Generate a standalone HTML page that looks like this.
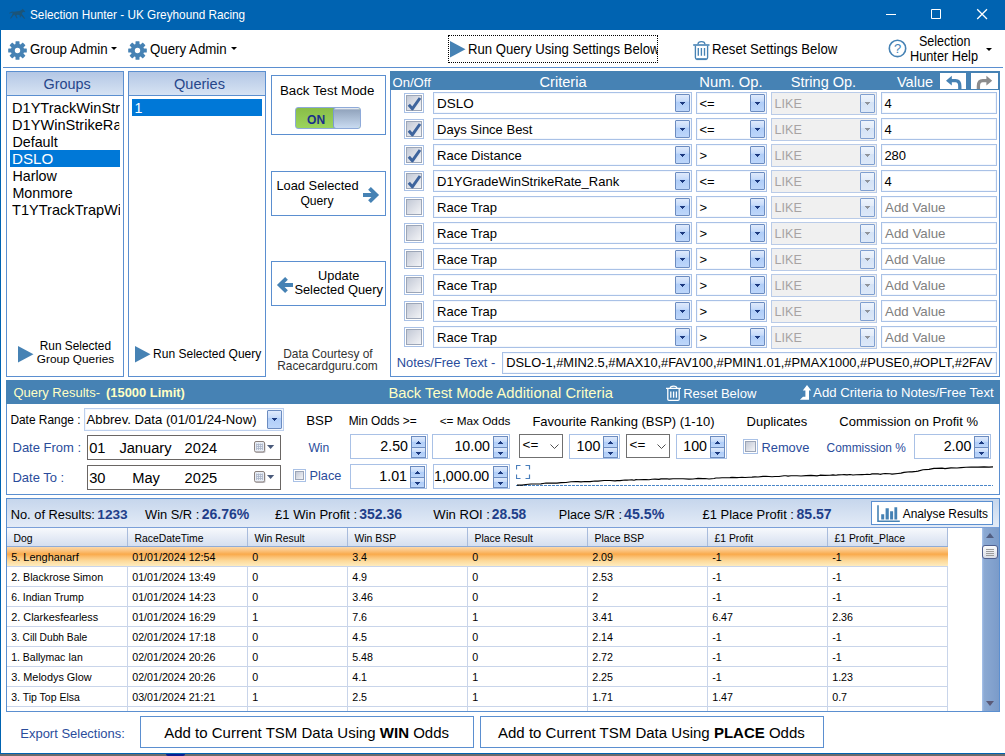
<!DOCTYPE html><html><head><meta charset="utf-8"><title>Selection Hunter - UK Greyhound Racing</title><style>
*{box-sizing:border-box;margin:0;padding:0}
html,body{width:1005px;height:756px;overflow:hidden;background:#fff}
body{font-family:"Liberation Sans",sans-serif;font-size:12px;color:#000;position:relative}
.a{position:absolute;white-space:nowrap}
.pn{position:absolute;border:1px solid #5b8fd0;background:#fff}
.hd{position:absolute;left:0;right:0;top:0;background:linear-gradient(#b4c7e5,#d6e3f3);border-bottom:1px solid #5b8fd0}
.bt{position:absolute;border:1px solid #5b8fd0;background:#fff}
.cb{position:absolute;border:1px solid #a9c1e6;background:#fff;box-shadow:inset 0 0 0 1px #f3f7fd}
.cb.dis{background:#f0f0f0;border-color:#b9cbe8;box-shadow:none}
.ar{position:absolute;width:15px;height:18px;border:1px solid #6c8cc0;border-radius:1px;background:linear-gradient(#dfeafc 0%,#c6dbfa 40%,#afcdf8 42%,#bdd6fa 100%)}
.ar:after{content:"";position:absolute;left:4px;top:7px;width:5px;height:3px;background:linear-gradient(#1c3a80,#1c3a80) 0 0/5px 1px no-repeat,linear-gradient(#1c3a80,#1c3a80) 1px 1px/3px 1px no-repeat,linear-gradient(#1c3a80,#1c3a80) 2px 2px/1px 1px no-repeat}
.ar.d{background:linear-gradient(#eef4fc 0%,#e3ecf9 42%,#d5e3f6 44%,#dde8f8 100%);border-color:#7f9fd0}
.ar.d:after{background:linear-gradient(#8f949c,#8f949c) 0 0/5px 1px no-repeat,linear-gradient(#8f949c,#8f949c) 1px 1px/3px 1px no-repeat,linear-gradient(#8f949c,#8f949c) 2px 2px/1px 1px no-repeat}
.ck{position:absolute;width:20px;height:20px;border:1px solid #a9c1e6;background:#fff}
.ck i{position:absolute;left:1px;top:1px;right:1px;bottom:1px;border:1px solid #9ca6b8;background:linear-gradient(135deg,#c3c9d6,#f3f4f7)}
.sp{position:absolute;border:1px solid #a9c1e6;background:#fff}
.sb{position:absolute;width:15px;height:22px}
.sb b{position:absolute;left:0;right:0;height:12px;border:1px solid #6c8cc0;background:linear-gradient(#dfeafc 0%,#c6dbfa 45%,#afcdf8 50%,#bdd6fa 100%)}
.sb b:first-child{top:0}.sb b:last-child{top:11px;height:11px}
.sb b:after{content:"";position:absolute;left:4px;top:4px;width:5px;height:3px}
.sb b:first-child:after{background:linear-gradient(#1c3a80,#1c3a80) 2px 0/1px 1px no-repeat,linear-gradient(#1c3a80,#1c3a80) 1px 1px/3px 1px no-repeat,linear-gradient(#1c3a80,#1c3a80) 0 2px/5px 1px no-repeat}
.sb b:last-child:after{top:4px;background:linear-gradient(#1c3a80,#1c3a80) 0 0/5px 1px no-repeat,linear-gradient(#1c3a80,#1c3a80) 1px 1px/3px 1px no-repeat,linear-gradient(#1c3a80,#1c3a80) 2px 2px/1px 1px no-repeat}
.sel{position:absolute;border:1px solid #707070;background:#fff}
</style></head><body>
<div class="a" style="left:0;top:0;width:1005px;height:30px;background:#0063b1"></div>
<div class="a" style="left:0;top:30px;width:1px;height:724px;background:#0063b1"></div>
<div class="a" style="left:0;top:753px;width:1005px;height:1px;background:#0063b1"></div>
<div class="a" style="left:0;top:754px;width:1005px;height:2px;background:#6b6b6b"></div>
<div class="a" style="left:166px;top:754px;width:19px;height:2px;background:#0d1f8f;border-radius:0 0 8px 8px"></div>
<div class="a" style="left:29.8px;top:7px;font-size:13px;line-height:16px;color:#fff;transform:scaleX(0.905);transform-origin:0 0;">Selection Hunter - UK Greyhound Racing</div>
<svg class="a" style="left:870px;top:0" width="135" height="30"><path d="M16 14.500h10M61.500 9.500h9v9h-9z" stroke="#fff" stroke-width="1" fill="none"/><path d="M107.200 9.200l9.800 9.800M117 9.200l-9.800 9.800" stroke="#fff" stroke-width="1.300" fill="none"/></svg>
<svg class="a" style="left:8px;top:8px" width="19" height="12" viewBox="0 0 19 12"><path d="M1.0 5.0L4.0 3.4L6.0 3.8L11.5 3.0L13.5 2.0L14.8 0.8L15.6 1.8L17.2 3.4L16.4 4.2L15.0 3.8L13.8 5.8L15.5 8.0L17.2 10.4L16.2 10.8L13.0 7.6L12.6 9.4L11.8 9.2L11.6 7.0L9.0 6.8L8.4 7.8L9.6 10.0L8.8 10.4L7.0 7.6L6.2 6.6L3.0 10.6L2.0 10.4L4.4 6.4L4.6 4.6L1.4 5.6z" fill="#1b5478"/></svg>
<svg class="a" style="left:8.3px;top:40.9px" width="19" height="19" viewBox="-9.500 -9.500 19 19"><g fill="#4682b4"><rect x="-2" y="-9.300" width="4" height="5" rx=".5" transform="rotate(0)"/><rect x="-2" y="-9.300" width="4" height="5" rx=".5" transform="rotate(45)"/><rect x="-2" y="-9.300" width="4" height="5" rx=".5" transform="rotate(90)"/><rect x="-2" y="-9.300" width="4" height="5" rx=".5" transform="rotate(135)"/><rect x="-2" y="-9.300" width="4" height="5" rx=".5" transform="rotate(180)"/><rect x="-2" y="-9.300" width="4" height="5" rx=".5" transform="rotate(225)"/><rect x="-2" y="-9.300" width="4" height="5" rx=".5" transform="rotate(270)"/><rect x="-2" y="-9.300" width="4" height="5" rx=".5" transform="rotate(315)"/></g><circle r="4.700" fill="none" stroke="#4682b4" stroke-width="4"/></svg>
<div class="a" style="left:29.9px;top:41px;font-size:14px;line-height:17px;transform:scaleX(0.950);transform-origin:0 0;">Group Admin</div>
<div class="a" style="left:110.5px;top:47px;border:3px solid transparent;border-top:3px solid #000;border-bottom:0"></div>
<svg class="a" style="left:128.1px;top:40.9px" width="19" height="19" viewBox="-9.500 -9.500 19 19"><g fill="#4682b4"><rect x="-2" y="-9.300" width="4" height="5" rx=".5" transform="rotate(0)"/><rect x="-2" y="-9.300" width="4" height="5" rx=".5" transform="rotate(45)"/><rect x="-2" y="-9.300" width="4" height="5" rx=".5" transform="rotate(90)"/><rect x="-2" y="-9.300" width="4" height="5" rx=".5" transform="rotate(135)"/><rect x="-2" y="-9.300" width="4" height="5" rx=".5" transform="rotate(180)"/><rect x="-2" y="-9.300" width="4" height="5" rx=".5" transform="rotate(225)"/><rect x="-2" y="-9.300" width="4" height="5" rx=".5" transform="rotate(270)"/><rect x="-2" y="-9.300" width="4" height="5" rx=".5" transform="rotate(315)"/></g><circle r="4.700" fill="none" stroke="#4682b4" stroke-width="4"/></svg>
<div class="a" style="left:149.8px;top:41px;font-size:14px;line-height:17px;transform:scaleX(0.947);transform-origin:0 0;">Query Admin</div>
<div class="a" style="left:230.5px;top:47px;border:3px solid transparent;border-top:3px solid #000;border-bottom:0"></div>
<div class="a" style="left:448px;top:35px;width:210px;height:28px;border:1px dotted #000"></div>
<svg class="a" style="left:450px;top:41px" width="16" height="17"><path d="M0 0l15.500 8.300L0 16.600z" fill="#4682b4"/></svg>
<div class="a" style="left:467.8px;top:41px;font-size:14px;line-height:17px;transform:scaleX(0.939);transform-origin:0 0;width:202.2px;overflow:hidden;">Run Query Using Settings Below</div>
<svg class="a" style="left:693px;top:40px" width="17" height="21" viewBox="0 0 17 21"><path d="M.2 5H16.500" stroke="#4682b4" stroke-width="1.600" fill="none"/><path d="M5 4.300Q5 1.600 8.400 1.600 11.900 1.600 11.900 4.300M2.400 5.800V17.600Q2.400 19.200 4 19.200H13Q14.600 19.200 14.600 17.600V5.800M5.300 8.100V15.700M8.400 8.100V15.700M11.500 8.100V15.700" stroke="#4682b4" stroke-width="1.350" fill="none"/><path d="M3.500 19.200H13.500" stroke="#4682b4" stroke-width="1.800" fill="none"/></svg>
<div class="a" style="left:712.4px;top:41px;font-size:14px;line-height:17px;transform:scaleX(0.941);transform-origin:0 0;">Reset Settings Below</div>
<svg class="a" style="left:887.500px;top:39px" width="19" height="19" viewBox="0 0 19 19"><circle cx="9.500" cy="9.400" r="8.200" fill="none" stroke="#4682b4" stroke-width="1.600"/><text x="9.500" y="14" font-size="13" text-anchor="middle" fill="#4682b4" font-family="Liberation Sans,sans-serif">?</text></svg>
<div class="a" style="left:918.8px;top:33px;font-size:14px;line-height:17px;transform:scaleX(0.894);transform-origin:0 0;">Selection</div>
<div class="a" style="left:910.4px;top:48px;font-size:14px;line-height:17px;transform:scaleX(0.910);transform-origin:0 0;">Hunter Help</div>
<div class="a" style="left:985.5px;top:48px;border:3px solid transparent;border-top:3px solid #000;border-bottom:0"></div>
<div class="a" style="left:3px;top:67px;width:1000px;height:1px;background:#5b8fd0"></div>
<div class="pn" style="left:6px;top:71px;width:118px;height:306px"><div class="hd" style="height:24px"></div></div>
<div class="a" style="left:43.5px;top:76px;font-size:14.42px;line-height:17px;color:#26468a;">Groups</div>
<div class="a" style="left:12.4px;top:100px;font-size:14.3px;line-height:17px;transform:scaleX(1.020);transform-origin:0 0;width:105.5px;overflow:hidden;">D1YTrackWinStr</div>
<div class="a" style="left:12.4px;top:117px;font-size:14.3px;line-height:17px;transform:scaleX(1.021);transform-origin:0 0;width:105.4px;overflow:hidden;">D1YWinStrikeRa</div>
<div class="a" style="left:12.4px;top:134px;font-size:14.3px;line-height:17px;transform:scaleX(1.000);transform-origin:0 0;width:107.6px;overflow:hidden;">Default</div>
<div class="a" style="left:10px;top:150px;width:110px;height:17px;background:#0078d7"></div>
<div class="a" style="left:12.4px;top:151px;font-size:14.3px;line-height:17px;color:#fff;transform:scaleX(1.060);transform-origin:0 0;width:101.5px;overflow:hidden;">DSLO</div>
<div class="a" style="left:12.4px;top:168px;font-size:14.3px;line-height:17px;transform:scaleX(1.000);transform-origin:0 0;width:107.6px;overflow:hidden;">Harlow</div>
<div class="a" style="left:12.4px;top:185px;font-size:14.3px;line-height:17px;transform:scaleX(1.000);transform-origin:0 0;width:107.6px;overflow:hidden;">Monmore</div>
<div class="a" style="left:12.4px;top:202px;font-size:14.3px;line-height:17px;transform:scaleX(1.020);transform-origin:0 0;width:105.5px;overflow:hidden;">T1YTrackTrapWi</div>
<svg class="a" style="left:18px;top:346px" width="16" height="17"><path d="M0 0l15.500 8.300L0 16.600z" fill="#4682b4"/></svg>
<div class="a" style="left:39.8px;top:339px;font-size:11.86px;line-height:14px;">Run Selected</div>
<div class="a" style="left:36.8px;top:352px;font-size:11.8px;line-height:14px;">Group Queries</div>
<div class="pn" style="left:128px;top:71px;width:138px;height:306px"><div class="hd" style="height:24px"></div></div>
<div class="a" style="left:174px;top:76px;font-size:14.56px;line-height:17px;color:#26468a;">Queries</div>
<div class="a" style="left:132px;top:99px;width:130px;height:17px;background:#0078d7"></div>
<div class="a" style="left:134.5px;top:100px;font-size:14.3px;line-height:17px;color:#fff;">1</div>
<svg class="a" style="left:135px;top:346px" width="16" height="17"><path d="M0 0l15.500 8.300L0 16.600z" fill="#4682b4"/></svg>
<div class="a" style="left:153.1px;top:347px;font-size:12.03px;line-height:14px;">Run Selected Query</div>
<div class="bt" style="left:271px;top:75px;width:115px;height:60px"></div>
<div class="a" style="left:279.9px;top:83px;font-size:13.32px;line-height:16px;">Back Test Mode</div>
<div class="a" style="left:295px;top:107px;width:66px;height:22px;border:1px solid #8eaad9;border-radius:3px;background:linear-gradient(#89bd48,#9bd45c);overflow:hidden"><div class="a" style="left:37px;top:-1px;width:29px;height:22px;border:1px solid #7b9bd3;border-radius:3px;background:linear-gradient(#fff 0,#93a5be 2px,#c9dbf1 100%)"></div></div>
<div class="a" style="left:306.5px;top:112px;font-size:13.3px;line-height:16px;color:#1b2f8a;font-weight:bold;transform:scaleX(0.907);transform-origin:0 0;">ON</div>
<div class="bt" style="left:271px;top:171px;width:115px;height:45px"></div>
<div class="a" style="left:276.4px;top:178px;font-size:12.86px;line-height:15px;">Load Selected</div>
<div class="a" style="left:300.4px;top:194px;font-size:12.15px;line-height:15px;">Query</div>
<svg class="a" style="left:362px;top:186px" width="18" height="18" viewBox="0 0 18 18"><path d="M1 9h14M7.500 2.300l6.800 6.700-6.800 6.700" stroke="#4682b4" stroke-width="3.900" fill="none"/></svg>
<div class="bt" style="left:271px;top:261px;width:115px;height:45px"></div>
<div class="a" style="left:318.1px;top:268px;font-size:12.81px;line-height:15px;">Update</div>
<div class="a" style="left:294.4px;top:282px;font-size:12.85px;line-height:15px;">Selected Query</div>
<svg class="a" style="left:276px;top:276px" width="18" height="18" viewBox="0 0 18 18"><path d="M17 9H3M10.500 2.300L3.700 9l6.800 6.700" stroke="#4682b4" stroke-width="3.900" fill="none"/></svg>
<div class="a" style="left:283.2px;top:347px;font-size:11.93px;line-height:14px;color:#333;">Data Courtesy of</div>
<div class="a" style="left:277.2px;top:359px;font-size:11.91px;line-height:14px;color:#333;">Racecardguru.com</div>
<div class="pn" style="left:390px;top:71px;width:610px;height:306px"></div>
<div class="a" style="left:390px;top:71px;width:610px;height:19px;background:#4682b4"></div>
<div class="a" style="left:392.6px;top:75px;font-size:13.05px;line-height:16px;color:#fff;">On/Off</div>
<div class="a" style="left:539.6px;top:73px;font-size:14.58px;line-height:18px;color:#fff;">Criteria</div>
<div class="a" style="left:699.3px;top:73px;font-size:14.79px;line-height:18px;color:#fff;">Num. Op.</div>
<div class="a" style="left:790.8px;top:74px;font-size:14.53px;line-height:17px;color:#fff;">String Op.</div>
<div class="a" style="left:897px;top:74px;font-size:14.5px;line-height:17px;color:#fff;">Value</div>
<div class="a" style="left:940px;top:73px;width:26px;height:16px;background:#fff"></div>
<div class="a" style="left:971px;top:73px;width:27px;height:16px;background:#fff"></div>
<svg class="a" style="left:940px;top:73px" width="26" height="16" viewBox="0 0 26 16"><path d="M6 7.700L11.800 2.800v9.800z" fill="#4682b4"/><path d="M11 7.600h4.500q4.300 0 4.300 5.400v3" stroke="#4682b4" stroke-width="3.300" fill="none"/></svg>
<svg class="a" style="left:971px;top:73px" width="27" height="16" viewBox="0 0 27 16"><path d="M21.200 7.700L15.400 2.800v9.800z" fill="#8c8c8c"/><path d="M16.200 7.600h-4.500q-4.300 0-4.300 5.400v3" stroke="#8c8c8c" stroke-width="3.300" fill="none"/></svg>
<div class="ck" style="left:404px;top:93px"><i></i><svg class="a" style="left:-1px;top:-1px" width="20" height="20" viewBox="0 0 20 20"><path d="M4.800 11.800L8.300 15.800 16 5" stroke="#3e649d" stroke-width="3" fill="none" stroke-linejoin="round"/></svg></div>
<div class="cb" style="left:433px;top:92px;width:259px;height:22px"><span class="ar" style="right:1px;top:1px"></span></div>
<div class="a" style="left:437.1px;top:96px;font-size:13px;line-height:16px;transform:scaleX(1.034);transform-origin:0 0;">DSLO</div>
<div class="cb" style="left:696px;top:92px;width:71px;height:22px"><span class="ar" style="right:1px;top:1px"></span></div>
<div class="a" style="left:699.5px;top:96px;font-size:13px;line-height:16px;">&lt;=</div>
<div class="cb dis" style="left:771px;top:92px;width:106px;height:23px"><span class="ar d" style="right:1px;top:1px;height:19px"></span></div>
<div class="a" style="left:774.5px;top:97px;font-size:12.6px;line-height:15px;color:#a7a3a3;">LIKE</div>
<div class="cb" style="left:881px;top:92px;width:116px;height:22px"></div>
<div class="a" style="left:884.4px;top:96px;font-size:13px;line-height:16px;">4</div>
<div class="ck" style="left:404px;top:119px"><i></i><svg class="a" style="left:-1px;top:-1px" width="20" height="20" viewBox="0 0 20 20"><path d="M4.800 11.800L8.300 15.800 16 5" stroke="#3e649d" stroke-width="3" fill="none" stroke-linejoin="round"/></svg></div>
<div class="cb" style="left:433px;top:118px;width:259px;height:22px"><span class="ar" style="right:1px;top:1px"></span></div>
<div class="a" style="left:437.1px;top:122px;font-size:13px;line-height:16px;">Days Since Best</div>
<div class="cb" style="left:696px;top:118px;width:71px;height:22px"><span class="ar" style="right:1px;top:1px"></span></div>
<div class="a" style="left:699.5px;top:122px;font-size:13px;line-height:16px;">&lt;=</div>
<div class="cb dis" style="left:771px;top:118px;width:106px;height:23px"><span class="ar d" style="right:1px;top:1px;height:19px"></span></div>
<div class="a" style="left:774.5px;top:123px;font-size:12.6px;line-height:15px;color:#a7a3a3;">LIKE</div>
<div class="cb" style="left:881px;top:118px;width:116px;height:22px"></div>
<div class="a" style="left:884.4px;top:122px;font-size:13px;line-height:16px;">4</div>
<div class="ck" style="left:404px;top:145px"><i></i><svg class="a" style="left:-1px;top:-1px" width="20" height="20" viewBox="0 0 20 20"><path d="M4.800 11.800L8.300 15.800 16 5" stroke="#3e649d" stroke-width="3" fill="none" stroke-linejoin="round"/></svg></div>
<div class="cb" style="left:433px;top:144px;width:259px;height:22px"><span class="ar" style="right:1px;top:1px"></span></div>
<div class="a" style="left:437.1px;top:148px;font-size:13px;line-height:16px;">Race Distance</div>
<div class="cb" style="left:696px;top:144px;width:71px;height:22px"><span class="ar" style="right:1px;top:1px"></span></div>
<div class="a" style="left:699.5px;top:148px;font-size:13px;line-height:16px;">&gt;</div>
<div class="cb dis" style="left:771px;top:144px;width:106px;height:23px"><span class="ar d" style="right:1px;top:1px;height:19px"></span></div>
<div class="a" style="left:774.5px;top:149px;font-size:12.6px;line-height:15px;color:#a7a3a3;">LIKE</div>
<div class="cb" style="left:881px;top:144px;width:116px;height:22px"></div>
<div class="a" style="left:884.4px;top:148px;font-size:13px;line-height:16px;">280</div>
<div class="ck" style="left:404px;top:171px"><i></i><svg class="a" style="left:-1px;top:-1px" width="20" height="20" viewBox="0 0 20 20"><path d="M4.800 11.800L8.300 15.800 16 5" stroke="#3e649d" stroke-width="3" fill="none" stroke-linejoin="round"/></svg></div>
<div class="cb" style="left:433px;top:170px;width:259px;height:22px"><span class="ar" style="right:1px;top:1px"></span></div>
<div class="a" style="left:437.1px;top:174px;font-size:13px;line-height:16px;">D1YGradeWinStrikeRate_Rank</div>
<div class="cb" style="left:696px;top:170px;width:71px;height:22px"><span class="ar" style="right:1px;top:1px"></span></div>
<div class="a" style="left:699.5px;top:174px;font-size:13px;line-height:16px;">&lt;=</div>
<div class="cb dis" style="left:771px;top:170px;width:106px;height:23px"><span class="ar d" style="right:1px;top:1px;height:19px"></span></div>
<div class="a" style="left:774.5px;top:175px;font-size:12.6px;line-height:15px;color:#a7a3a3;">LIKE</div>
<div class="cb" style="left:881px;top:170px;width:116px;height:22px"></div>
<div class="a" style="left:884.4px;top:174px;font-size:13px;line-height:16px;">4</div>
<div class="ck" style="left:404px;top:197px"><i></i></div>
<div class="cb" style="left:433px;top:196px;width:259px;height:22px"><span class="ar" style="right:1px;top:1px"></span></div>
<div class="a" style="left:437.1px;top:200px;font-size:13px;line-height:16px;">Race Trap</div>
<div class="cb" style="left:696px;top:196px;width:71px;height:22px"><span class="ar" style="right:1px;top:1px"></span></div>
<div class="a" style="left:699.5px;top:200px;font-size:13px;line-height:16px;">&gt;</div>
<div class="cb dis" style="left:771px;top:196px;width:106px;height:23px"><span class="ar d" style="right:1px;top:1px;height:19px"></span></div>
<div class="a" style="left:774.5px;top:201px;font-size:12.6px;line-height:15px;color:#a7a3a3;">LIKE</div>
<div class="cb" style="left:881px;top:196px;width:116px;height:22px"></div>
<div class="a" style="left:885.1px;top:200px;font-size:13.3px;line-height:16px;color:#808080;">Add Value</div>
<div class="ck" style="left:404px;top:223px"><i></i></div>
<div class="cb" style="left:433px;top:222px;width:259px;height:22px"><span class="ar" style="right:1px;top:1px"></span></div>
<div class="a" style="left:437.1px;top:226px;font-size:13px;line-height:16px;">Race Trap</div>
<div class="cb" style="left:696px;top:222px;width:71px;height:22px"><span class="ar" style="right:1px;top:1px"></span></div>
<div class="a" style="left:699.5px;top:226px;font-size:13px;line-height:16px;">&gt;</div>
<div class="cb dis" style="left:771px;top:222px;width:106px;height:23px"><span class="ar d" style="right:1px;top:1px;height:19px"></span></div>
<div class="a" style="left:774.5px;top:227px;font-size:12.6px;line-height:15px;color:#a7a3a3;">LIKE</div>
<div class="cb" style="left:881px;top:222px;width:116px;height:22px"></div>
<div class="a" style="left:885.1px;top:226px;font-size:13.3px;line-height:16px;color:#808080;">Add Value</div>
<div class="ck" style="left:404px;top:249px"><i></i></div>
<div class="cb" style="left:433px;top:248px;width:259px;height:22px"><span class="ar" style="right:1px;top:1px"></span></div>
<div class="a" style="left:437.1px;top:252px;font-size:13px;line-height:16px;">Race Trap</div>
<div class="cb" style="left:696px;top:248px;width:71px;height:22px"><span class="ar" style="right:1px;top:1px"></span></div>
<div class="a" style="left:699.5px;top:252px;font-size:13px;line-height:16px;">&gt;</div>
<div class="cb dis" style="left:771px;top:248px;width:106px;height:23px"><span class="ar d" style="right:1px;top:1px;height:19px"></span></div>
<div class="a" style="left:774.5px;top:253px;font-size:12.6px;line-height:15px;color:#a7a3a3;">LIKE</div>
<div class="cb" style="left:881px;top:248px;width:116px;height:22px"></div>
<div class="a" style="left:885.1px;top:252px;font-size:13.3px;line-height:16px;color:#808080;">Add Value</div>
<div class="ck" style="left:404px;top:275px"><i></i></div>
<div class="cb" style="left:433px;top:274px;width:259px;height:22px"><span class="ar" style="right:1px;top:1px"></span></div>
<div class="a" style="left:437.1px;top:278px;font-size:13px;line-height:16px;">Race Trap</div>
<div class="cb" style="left:696px;top:274px;width:71px;height:22px"><span class="ar" style="right:1px;top:1px"></span></div>
<div class="a" style="left:699.5px;top:278px;font-size:13px;line-height:16px;">&gt;</div>
<div class="cb dis" style="left:771px;top:274px;width:106px;height:23px"><span class="ar d" style="right:1px;top:1px;height:19px"></span></div>
<div class="a" style="left:774.5px;top:279px;font-size:12.6px;line-height:15px;color:#a7a3a3;">LIKE</div>
<div class="cb" style="left:881px;top:274px;width:116px;height:22px"></div>
<div class="a" style="left:885.1px;top:278px;font-size:13.3px;line-height:16px;color:#808080;">Add Value</div>
<div class="ck" style="left:404px;top:301px"><i></i></div>
<div class="cb" style="left:433px;top:300px;width:259px;height:22px"><span class="ar" style="right:1px;top:1px"></span></div>
<div class="a" style="left:437.1px;top:304px;font-size:13px;line-height:16px;">Race Trap</div>
<div class="cb" style="left:696px;top:300px;width:71px;height:22px"><span class="ar" style="right:1px;top:1px"></span></div>
<div class="a" style="left:699.5px;top:304px;font-size:13px;line-height:16px;">&gt;</div>
<div class="cb dis" style="left:771px;top:300px;width:106px;height:23px"><span class="ar d" style="right:1px;top:1px;height:19px"></span></div>
<div class="a" style="left:774.5px;top:305px;font-size:12.6px;line-height:15px;color:#a7a3a3;">LIKE</div>
<div class="cb" style="left:881px;top:300px;width:116px;height:22px"></div>
<div class="a" style="left:885.1px;top:304px;font-size:13.3px;line-height:16px;color:#808080;">Add Value</div>
<div class="ck" style="left:404px;top:327px"><i></i></div>
<div class="cb" style="left:433px;top:326px;width:259px;height:22px"><span class="ar" style="right:1px;top:1px"></span></div>
<div class="a" style="left:437.1px;top:330px;font-size:13px;line-height:16px;">Race Trap</div>
<div class="cb" style="left:696px;top:326px;width:71px;height:22px"><span class="ar" style="right:1px;top:1px"></span></div>
<div class="a" style="left:699.5px;top:330px;font-size:13px;line-height:16px;">&gt;</div>
<div class="cb dis" style="left:771px;top:326px;width:106px;height:23px"><span class="ar d" style="right:1px;top:1px;height:19px"></span></div>
<div class="a" style="left:774.5px;top:331px;font-size:12.6px;line-height:15px;color:#a7a3a3;">LIKE</div>
<div class="cb" style="left:881px;top:326px;width:116px;height:22px"></div>
<div class="a" style="left:885.1px;top:330px;font-size:13.3px;line-height:16px;color:#808080;">Add Value</div>
<div class="a" style="left:396.7px;top:355px;font-size:12.9px;line-height:15px;color:#2a4c9b;">Notes/Free Text -</div>
<div class="cb" style="left:502px;top:352px;width:495px;height:22px"></div>
<div class="a" style="left:506.2px;top:355px;font-size:12.85px;line-height:15px;">DSLO-1,#MIN2.5,#MAX10,#FAV100,#PMIN1.01,#PMAX1000,#PUSE0,#OPLT,#2FAV</div>
<div class="pn" style="left:6px;top:380px;width:994px;height:115px"></div>
<div class="a" style="left:6px;top:380px;width:994px;height:24px;background:#4682b4"></div>
<div class="a" style="left:13.4px;top:385px;font-size:12.99px;line-height:16px;color:#ffffc4;">Query Results-</div>
<div class="a" style="left:106px;top:385px;font-size:12.92px;line-height:16px;color:#ffffc4;font-weight:bold;">(15000 Limit)</div>
<div class="a" style="left:388.4px;top:384px;font-size:14.77px;line-height:18px;color:#ffffc4;">Back Test Mode Additional Criteria</div>
<svg class="a" style="left:666px;top:385px" width="15" height="17" viewBox="0 0 15 17"><path d="M0 3.400H15M4.200 3Q4.200 1.100 7.500 1.100 10.800 1.100 10.800 3M1.800 4V14.300Q1.800 15.400 3 15.400H12Q13.200 15.400 13.200 14.300V4M4.800 6.400V12.700M7.600 6.400V12.700M10.400 6.400V12.700" stroke="#fff" stroke-width="1.300" fill="none"/></svg>
<div class="a" style="left:683.2px;top:386px;font-size:13.06px;line-height:16px;color:#fff;">Reset Below</div>
<svg class="a" style="left:799px;top:384px" width="13" height="17" viewBox="0 0 13 17"><path d="M8 .9L12.200 6.500H10V15.800H.9L4 12.800H6.400V6.500H3.800z" fill="#fff"/></svg>
<div class="a" style="left:813.1px;top:385px;font-size:13.18px;line-height:16px;color:#fff;">Add Criteria to Notes/Free Text</div>
<div class="a" style="left:10.4px;top:413px;font-size:11.91px;line-height:14px;">Date Range :</div>
<div class="cb" style="left:84px;top:408px;width:200px;height:23px;border-color:#bdd0ee"><span class="ar" style="right:1px;top:1px;height:19px"></span></div>
<div class="a" style="left:86.6px;top:412px;font-size:13.15px;line-height:16px;">Abbrev. Data (01/01/24-Now)</div>
<div class="a" style="left:12.5px;top:440px;font-size:13.01px;line-height:16px;color:#2a4c9b;">Date From :</div>
<div class="a" style="left:12.5px;top:470px;font-size:12.98px;line-height:16px;color:#2a4c9b;">Date To :</div>
<div class="a" style="left:87px;top:435px;width:194px;height:25px;border:1px solid #6a6664;background:#fff"></div>
<div class="a" style="left:89.2px;top:439px;font-size:14.67px;line-height:18px;">01</div>
<div class="a" style="left:119.4px;top:439px;font-size:14.67px;line-height:18px;">January</div>
<div class="a" style="left:184.6px;top:439px;font-size:14.67px;line-height:18px;">2024</div>
<svg class="a" style="left:254px;top:441px" width="21" height="13" viewBox="0 0 21 13"><rect x="1.500" y="1.500" width="10" height="10.500" rx="1.500" fill="#c9c9cf"/><rect x=".5" y=".5" width="10" height="10.500" rx="1.500" fill="#e9eef6" stroke="#8a807c"/><path d="M2.500 3.500h6M2.500 5.500h6M2.500 7.500h6M4.500 2.500v6.500M6.500 2.500v6.500M2.500 2.500v6.500M8.500 2.500v6.500" stroke="#aab4c8" stroke-width=".8"/><path d="M13 4h7.200l-3.600 4z" fill="#4a5a7a"/></svg>
<div class="a" style="left:87px;top:465px;width:194px;height:25px;border:1px solid #6a6664;background:#fff"></div>
<div class="a" style="left:89.2px;top:469px;font-size:14.67px;line-height:18px;">30</div>
<div class="a" style="left:132.2px;top:469px;font-size:14.67px;line-height:18px;">May</div>
<div class="a" style="left:184.6px;top:469px;font-size:14.67px;line-height:18px;">2025</div>
<svg class="a" style="left:254px;top:471px" width="21" height="13" viewBox="0 0 21 13"><rect x="1.500" y="1.500" width="10" height="10.500" rx="1.500" fill="#c9c9cf"/><rect x=".5" y=".5" width="10" height="10.500" rx="1.500" fill="#e9eef6" stroke="#8a807c"/><path d="M2.500 3.500h6M2.500 5.500h6M2.500 7.500h6M4.500 2.500v6.500M6.500 2.500v6.500M2.500 2.500v6.500M8.500 2.500v6.500" stroke="#aab4c8" stroke-width=".8"/><path d="M13 4h7.200l-3.600 4z" fill="#4a5a7a"/></svg>
<div class="a" style="left:306.3px;top:413px;font-size:13.24px;line-height:16px;">BSP</div>
<div class="a" style="left:348.7px;top:414px;font-size:11.88px;line-height:14px;">Min Odds &gt;=</div>
<div class="a" style="left:439.7px;top:414px;font-size:11.78px;line-height:14px;">&lt;= Max Odds</div>
<div class="a" style="left:308.4px;top:441px;font-size:12.14px;line-height:15px;color:#2a4c9b;">Win</div>
<div class="ck" style="left:293px;top:469px;width:13px;height:13px"><i></i></div>
<div class="a" style="left:309.5px;top:468px;font-size:12.75px;line-height:15px;color:#2a4c9b;">Place</div>
<div class="sp" style="left:350px;top:434px;width:78px;height:25px"><span class="sb" style="right:1px;top:1px"><b></b><b></b></span></div>
<div class="a" style="left:380.36px;top:438px;font-size:14.2px;line-height:17px;">2.50</div>
<div class="sp" style="left:432px;top:434px;width:78px;height:25px"><span class="sb" style="right:1px;top:1px"><b></b><b></b></span></div>
<div class="a" style="left:454.46px;top:438px;font-size:14.2px;line-height:17px;">10.00</div>
<div class="sp" style="left:350px;top:464px;width:77px;height:25px"><span class="sb" style="right:1px;top:1px"><b></b><b></b></span></div>
<div class="a" style="left:379.36px;top:468px;font-size:14.2px;line-height:17px;">1.01</div>
<div class="sp" style="left:433px;top:464px;width:77px;height:25px"><span class="sb" style="right:1px;top:1px"><b></b><b></b></span></div>
<div class="a" style="left:434.02px;top:468px;font-size:14.2px;line-height:17px;">1,000.00</div>
<div class="a" style="left:532.4px;top:414px;font-size:13.01px;line-height:16px;">Favourite Ranking (BSP) (1-10)</div>
<div class="sel" style="left:519px;top:434px;width:44px;height:24px"><svg class="a" style="left:30px;top:9px" width="10" height="6"><path d="M.5.500l4 4 4-4" stroke="#505050" fill="none"/></svg></div>
<div class="a" style="left:522.6px;top:437px;font-size:13.5px;line-height:16px;">&lt;=</div>
<div class="sel" style="left:626px;top:434px;width:44px;height:24px"><svg class="a" style="left:30px;top:9px" width="10" height="6"><path d="M.5.500l4 4 4-4" stroke="#505050" fill="none"/></svg></div>
<div class="a" style="left:629.6px;top:437px;font-size:13.5px;line-height:16px;">&lt;=</div>
<div class="sp" style="left:569px;top:434px;width:51px;height:25px"><span class="sb" style="right:1px;top:1px"><b></b><b></b></span></div>
<div class="a" style="left:576.61px;top:438px;font-size:14.2px;line-height:17px;">100</div>
<div class="sp" style="left:676px;top:434px;width:51px;height:25px"><span class="sb" style="right:1px;top:1px"><b></b><b></b></span></div>
<div class="a" style="left:683.31px;top:438px;font-size:14.2px;line-height:17px;">100</div>
<div class="a" style="left:746.6px;top:414px;font-size:12.98px;line-height:16px;">Duplicates</div>
<div class="ck" style="left:743px;top:439px;width:15px;height:15px"><i></i></div>
<div class="a" style="left:761.5px;top:440px;font-size:12.84px;line-height:15px;color:#2a4c9b;">Remove</div>
<div class="a" style="left:839.3px;top:414px;font-size:13.01px;line-height:16px;">Commission on Profit %</div>
<div class="a" style="left:826.6px;top:441px;font-size:11.88px;line-height:14px;color:#2a4c9b;">Commission %</div>
<div class="sp" style="left:914px;top:434px;width:77px;height:25px"><span class="sb" style="right:1px;top:1px"><b></b><b></b></span></div>
<div class="a" style="left:943.66px;top:438px;font-size:14.2px;line-height:17px;">2.00</div>
<svg class="a" style="left:516px;top:464px" width="480" height="26" viewBox="0 0 480 26"><path d="M.5 5.500v-4h4M9.500 1.500h4v4M13.500 10.500v4h-4M4.500 14.500h-4v-4" stroke="#4a7ebb" stroke-width="1.200" fill="none"/><path d="M0 21.500h477" stroke="#4a86c8" stroke-dasharray="3 1" stroke-width="1" fill="none" shape-rendering="crispEdges"/><path d="M1 21.06 L6 21.09 L10 20.53 L15 20.02 L20 19.95 L25 19.91 L27 19.51 L30 19.05 L36 19.12 L41 19.1 L45 18.65 L50 18.45 L55 17.75 L60 17.6 L62 17.62 L65 17.84 L69 17.46 L74 17.68 L79 17.01 L82 17.1 L88 16.54 L94 16.48 L99 16.9 L101 16.61 L104 16.56 L109 16.03 L111 16.19 L113 16 L116 15.9 L118 16.21 L120 15.64 L122 15.78 L128 15.54 L130 15.62 L133 15.7 L136 15.25 L139 15.16 L143 15.4 L145 14.88 L151 14.79 L153 15.06 L157 14.79 L162 14.75 L167 14.7 L173 15.1 L177 14.96 L179 14.74 L182 14.39 L187 14.58 L189 14.49 L193 15.02 L198 14.53 L200 13.97 L203 13.98 L206 13.7 L211 13.75 L214 13.67 L216 13.35 L221 13.58 L223 13.47 L226 13.37 L229 13.52 L233 13.25 L236 13.16 L239 12.84 L242 12.99 L247 12.36 L250 12.23 L256 12.73 L259 12.47 L263 12.54 L268 11.8 L270 11.78 L272 12.06 L275 11.79 L281 11.79 L285 12.05 L290 11.68 L295 11.33 L301 11.85 L304 11.19 L309 11.43 L314 11.3 L317 10.92 L320 11.28 L322 10.86 L326 10.76 L328 10.66 L331 10.89 L334 10.47 L337 11.05 L340 10.8 L346 10.56 L349 10.54 L351 10.4 L354 10.51 L356 9.92 L362 9.83 L364 10.31 L367 9.76 L369 9.67 L374 9.79 L376 10.17 L382 9.49 L385 9.16 L388 8.43 L394 7.78 L396 7.85 L400 7.41 L402 7.09 L407 5.79 L413 5.33 L418 4.41 L420 4.37 L426 4.11 L429 4.58 L435 3.86 L441 3.96 L445 3.65 L450 3.24 L455 3.07 L460 3 L462 3.06 L468 2.82 L473 3.13 L477 2.9" stroke="#000" stroke-width="1.150" fill="none" stroke-linejoin="round"/></svg>
<div class="pn" style="left:6px;top:498px;width:994px;height:214px"></div>
<div class="a" style="left:7px;top:499px;width:992px;height:29px;background:linear-gradient(#c6d6ec,#e3ebf7);border-bottom:1px solid #7a9fd8"></div>
<div class="a" style="left:10.7px;top:507px;font-size:12.85px;line-height:15px;">No. of Results:</div>
<div class="a" style="left:97.3px;top:507px;font-size:13.66px;line-height:16px;color:#1f3f8a;font-weight:bold;">1233</div>
<div class="a" style="left:145px;top:507px;font-size:12.86px;line-height:15px;">Win S/R :</div>
<div class="a" style="left:201.7px;top:506px;font-size:14.03px;line-height:17px;color:#1f3f8a;font-weight:bold;">26.76%</div>
<div class="a" style="left:275.1px;top:507px;font-size:13.07px;line-height:16px;">£1 Win Profit :</div>
<div class="a" style="left:359.2px;top:506px;font-size:13.99px;line-height:17px;color:#1f3f8a;font-weight:bold;">352.36</div>
<div class="a" style="left:433.3px;top:507px;font-size:13.08px;line-height:16px;">Win ROI :</div>
<div class="a" style="left:491.8px;top:506px;font-size:13.79px;line-height:17px;color:#1f3f8a;font-weight:bold;">28.58</div>
<div class="a" style="left:558.8px;top:508px;font-size:12.65px;line-height:15px;">Place S/R :</div>
<div class="a" style="left:624.1px;top:506px;font-size:14.18px;line-height:17px;color:#1f3f8a;font-weight:bold;">45.5%</div>
<div class="a" style="left:702.5px;top:507px;font-size:12.96px;line-height:16px;">£1 Place Profit :</div>
<div class="a" style="left:796.5px;top:506px;font-size:14.07px;line-height:17px;color:#1f3f8a;font-weight:bold;">85.57</div>
<div class="a" style="left:871px;top:501px;width:122px;height:24px;border:1px solid #5b8fd0;background:#fff"></div>
<svg class="a" style="left:876px;top:505px" width="25" height="18" viewBox="0 0 25 18"><path d="M1.200 .2h1.600v15.400h21v1.400H1.200z" fill="#4682b4"/><path d="M5.200 9.200h3v5.400h-3zM9.600 3.200h3.200v11.400H9.600zM14.100 6.200h3v8.400h-3zM18.400 2.200h2.800v12.400h-2.800z" fill="#4682b4"/></svg>
<div class="a" style="left:902.7px;top:507px;font-size:11.92px;line-height:14px;">Analyse Results</div>
<div class="a" style="left:7px;top:528px;width:941px;height:19px;background:linear-gradient(#f7f9fc,#d5dff0);border-bottom:1px solid #8fabd6"></div>
<div class="a" style="left:13.5px;top:533px;font-size:10.4px;line-height:12px;">Dog</div>
<div class="a" style="left:127px;top:528px;width:1px;height:18px;background:#a9bcdc"></div>
<div class="a" style="left:134.5px;top:533px;font-size:10.4px;line-height:12px;">RaceDateTime</div>
<div class="a" style="left:247px;top:528px;width:1px;height:18px;background:#a9bcdc"></div>
<div class="a" style="left:254.5px;top:533px;font-size:10.4px;line-height:12px;">Win Result</div>
<div class="a" style="left:347px;top:528px;width:1px;height:18px;background:#a9bcdc"></div>
<div class="a" style="left:354.5px;top:533px;font-size:10.4px;line-height:12px;">Win BSP</div>
<div class="a" style="left:467px;top:528px;width:1px;height:18px;background:#a9bcdc"></div>
<div class="a" style="left:474.5px;top:533px;font-size:10.4px;line-height:12px;">Place Result</div>
<div class="a" style="left:587px;top:528px;width:1px;height:18px;background:#a9bcdc"></div>
<div class="a" style="left:594.5px;top:533px;font-size:10.4px;line-height:12px;">Place BSP</div>
<div class="a" style="left:707px;top:528px;width:1px;height:18px;background:#a9bcdc"></div>
<div class="a" style="left:714.5px;top:533px;font-size:10.4px;line-height:12px;">£1 Profit</div>
<div class="a" style="left:827px;top:528px;width:1px;height:18px;background:#a9bcdc"></div>
<div class="a" style="left:834.5px;top:533px;font-size:10.4px;line-height:12px;">£1 Profit_Place</div>
<div class="a" style="left:947px;top:528px;width:1px;height:18px;background:#a9bcdc"></div>
<div class="a" style="left:7px;top:547px;width:941px;height:19px;background:linear-gradient(#fcd9ab 0%,#fbc27c 20%,#f9aa4c 38%,#fbbf70 52%,#fdd999 72%,#feecbf 100%)"></div>
<div class="a" style="left:7px;top:566px;width:941px;height:1px;background:#c9d5ea"></div>
<div class="a" style="left:11.2px;top:551px;font-size:10.95px;line-height:13px;">5. Lenghanarf</div>
<div class="a" style="left:132.2px;top:551px;font-size:10.7px;line-height:13px;">01/01/2024 12:54</div>
<div class="a" style="left:252.2px;top:551px;font-size:10.7px;line-height:13px;">0</div>
<div class="a" style="left:352.2px;top:551px;font-size:10.7px;line-height:13px;">3.4</div>
<div class="a" style="left:472.2px;top:551px;font-size:10.7px;line-height:13px;">0</div>
<div class="a" style="left:592.2px;top:551px;font-size:10.7px;line-height:13px;">2.09</div>
<div class="a" style="left:712.2px;top:551px;font-size:10.7px;line-height:13px;">-1</div>
<div class="a" style="left:832.2px;top:551px;font-size:10.7px;line-height:13px;">-1</div>
<div class="a" style="left:7px;top:586px;width:941px;height:1px;background:#c9d5ea"></div>
<div class="a" style="left:11.2px;top:571px;font-size:10.68px;line-height:13px;">2. Blackrose Simon</div>
<div class="a" style="left:132.2px;top:571px;font-size:10.7px;line-height:13px;">01/01/2024 13:49</div>
<div class="a" style="left:252.2px;top:571px;font-size:10.7px;line-height:13px;">0</div>
<div class="a" style="left:352.2px;top:571px;font-size:10.7px;line-height:13px;">4.9</div>
<div class="a" style="left:472.2px;top:571px;font-size:10.7px;line-height:13px;">0</div>
<div class="a" style="left:592.2px;top:571px;font-size:10.7px;line-height:13px;">2.53</div>
<div class="a" style="left:712.2px;top:571px;font-size:10.7px;line-height:13px;">-1</div>
<div class="a" style="left:832.2px;top:571px;font-size:10.7px;line-height:13px;">-1</div>
<div class="a" style="left:7px;top:606px;width:941px;height:1px;background:#c9d5ea"></div>
<div class="a" style="left:11.2px;top:591px;font-size:10.45px;line-height:13px;">6. Indian Trump</div>
<div class="a" style="left:132.2px;top:591px;font-size:10.7px;line-height:13px;">01/01/2024 14:23</div>
<div class="a" style="left:252.2px;top:591px;font-size:10.7px;line-height:13px;">0</div>
<div class="a" style="left:352.2px;top:591px;font-size:10.7px;line-height:13px;">3.46</div>
<div class="a" style="left:472.2px;top:591px;font-size:10.7px;line-height:13px;">0</div>
<div class="a" style="left:592.2px;top:591px;font-size:10.7px;line-height:13px;">2</div>
<div class="a" style="left:712.2px;top:591px;font-size:10.7px;line-height:13px;">-1</div>
<div class="a" style="left:832.2px;top:591px;font-size:10.7px;line-height:13px;">-1</div>
<div class="a" style="left:7px;top:626px;width:941px;height:1px;background:#c9d5ea"></div>
<div class="a" style="left:11.2px;top:611px;font-size:10.88px;line-height:13px;">2. Clarkesfearless</div>
<div class="a" style="left:132.2px;top:611px;font-size:10.7px;line-height:13px;">01/01/2024 16:29</div>
<div class="a" style="left:252.2px;top:611px;font-size:10.7px;line-height:13px;">1</div>
<div class="a" style="left:352.2px;top:611px;font-size:10.7px;line-height:13px;">7.6</div>
<div class="a" style="left:472.2px;top:611px;font-size:10.7px;line-height:13px;">1</div>
<div class="a" style="left:592.2px;top:611px;font-size:10.7px;line-height:13px;">3.41</div>
<div class="a" style="left:712.2px;top:611px;font-size:10.7px;line-height:13px;">6.47</div>
<div class="a" style="left:832.2px;top:611px;font-size:10.7px;line-height:13px;">2.36</div>
<div class="a" style="left:7px;top:646px;width:941px;height:1px;background:#c9d5ea"></div>
<div class="a" style="left:11.2px;top:632px;font-size:10.22px;line-height:12px;">3. Cill Dubh Bale</div>
<div class="a" style="left:132.2px;top:631px;font-size:10.7px;line-height:13px;">02/01/2024 17:18</div>
<div class="a" style="left:252.2px;top:631px;font-size:10.7px;line-height:13px;">0</div>
<div class="a" style="left:352.2px;top:631px;font-size:10.7px;line-height:13px;">4.5</div>
<div class="a" style="left:472.2px;top:631px;font-size:10.7px;line-height:13px;">0</div>
<div class="a" style="left:592.2px;top:631px;font-size:10.7px;line-height:13px;">2.14</div>
<div class="a" style="left:712.2px;top:631px;font-size:10.7px;line-height:13px;">-1</div>
<div class="a" style="left:832.2px;top:631px;font-size:10.7px;line-height:13px;">-1</div>
<div class="a" style="left:7px;top:666px;width:941px;height:1px;background:#c9d5ea"></div>
<div class="a" style="left:11.2px;top:651px;font-size:10.47px;line-height:13px;">1. Ballymac Ian</div>
<div class="a" style="left:132.2px;top:651px;font-size:10.7px;line-height:13px;">02/01/2024 20:26</div>
<div class="a" style="left:252.2px;top:651px;font-size:10.7px;line-height:13px;">0</div>
<div class="a" style="left:352.2px;top:651px;font-size:10.7px;line-height:13px;">5.48</div>
<div class="a" style="left:472.2px;top:651px;font-size:10.7px;line-height:13px;">0</div>
<div class="a" style="left:592.2px;top:651px;font-size:10.7px;line-height:13px;">2.72</div>
<div class="a" style="left:712.2px;top:651px;font-size:10.7px;line-height:13px;">-1</div>
<div class="a" style="left:832.2px;top:651px;font-size:10.7px;line-height:13px;">-1</div>
<div class="a" style="left:7px;top:686px;width:941px;height:1px;background:#c9d5ea"></div>
<div class="a" style="left:11.2px;top:671px;font-size:10.9px;line-height:13px;">3. Melodys Glow</div>
<div class="a" style="left:132.2px;top:671px;font-size:10.7px;line-height:13px;">02/01/2024 20:26</div>
<div class="a" style="left:252.2px;top:671px;font-size:10.7px;line-height:13px;">0</div>
<div class="a" style="left:352.2px;top:671px;font-size:10.7px;line-height:13px;">4.1</div>
<div class="a" style="left:472.2px;top:671px;font-size:10.7px;line-height:13px;">1</div>
<div class="a" style="left:592.2px;top:671px;font-size:10.7px;line-height:13px;">2.25</div>
<div class="a" style="left:712.2px;top:671px;font-size:10.7px;line-height:13px;">-1</div>
<div class="a" style="left:832.2px;top:671px;font-size:10.7px;line-height:13px;">1.23</div>
<div class="a" style="left:7px;top:706px;width:941px;height:1px;background:#c9d5ea"></div>
<div class="a" style="left:11.2px;top:691px;font-size:10.5px;line-height:13px;">3. Tip Top Elsa</div>
<div class="a" style="left:132.2px;top:691px;font-size:10.7px;line-height:13px;">03/01/2024 21:21</div>
<div class="a" style="left:252.2px;top:691px;font-size:10.7px;line-height:13px;">1</div>
<div class="a" style="left:352.2px;top:691px;font-size:10.7px;line-height:13px;">2.5</div>
<div class="a" style="left:472.2px;top:691px;font-size:10.7px;line-height:13px;">1</div>
<div class="a" style="left:592.2px;top:691px;font-size:10.7px;line-height:13px;">1.71</div>
<div class="a" style="left:712.2px;top:691px;font-size:10.7px;line-height:13px;">1.47</div>
<div class="a" style="left:832.2px;top:691px;font-size:10.7px;line-height:13px;">0.7</div>
<div class="a" style="left:127px;top:566px;width:1px;height:145px;background:#c9d5ea"></div>
<div class="a" style="left:247px;top:566px;width:1px;height:145px;background:#c9d5ea"></div>
<div class="a" style="left:347px;top:566px;width:1px;height:145px;background:#c9d5ea"></div>
<div class="a" style="left:467px;top:566px;width:1px;height:145px;background:#c9d5ea"></div>
<div class="a" style="left:587px;top:566px;width:1px;height:145px;background:#c9d5ea"></div>
<div class="a" style="left:707px;top:566px;width:1px;height:145px;background:#c9d5ea"></div>
<div class="a" style="left:827px;top:566px;width:1px;height:145px;background:#c9d5ea"></div>
<div class="a" style="left:947px;top:566px;width:1px;height:145px;background:#c9d5ea"></div>
<div class="a" style="left:982px;top:528px;width:17px;height:183px;background:linear-gradient(90deg,#a9c4ec 0,#8ba9d3 2px,#7b9bc9 100%)"></div>
<div class="a" style="left:986px;top:533px;border:4.500px solid transparent;border-bottom:5px solid #525e82;border-top:0"></div>
<div class="a" style="left:986px;top:701px;border:4.500px solid transparent;border-top:5px solid #5a5a78;border-bottom:0"></div>
<div class="a" style="left:982px;top:545px;width:16px;height:14px;border:1px solid #4f5f8e;border-radius:3px;background:linear-gradient(#fafbfc,#d9dde6)"><div class="a" style="left:3px;top:3px;width:8px;height:1px;background:#9c9c9c;box-shadow:0 2px #9c9c9c,0 4px #9c9c9c,0 6px #9c9c9c"></div></div>
<div class="a" style="left:20.3px;top:726px;font-size:12.97px;line-height:16px;color:#2a4c9b;">Export Selections:</div>
<div class="bt" style="left:140px;top:716px;width:334px;height:32px"></div>
<div class="bt" style="left:480px;top:716px;width:344px;height:32px"></div>
<div class="a" style="left:164.2px;top:724px;font-size:15.01px;line-height:18px">Add to Current TSM Data Using <b>WIN</b> Odds</div>
<div class="a" style="left:498px;top:724px;font-size:15.02px;line-height:18px">Add to Current TSM Data Using <b>PLACE</b> Odds</div>
</body></html>
